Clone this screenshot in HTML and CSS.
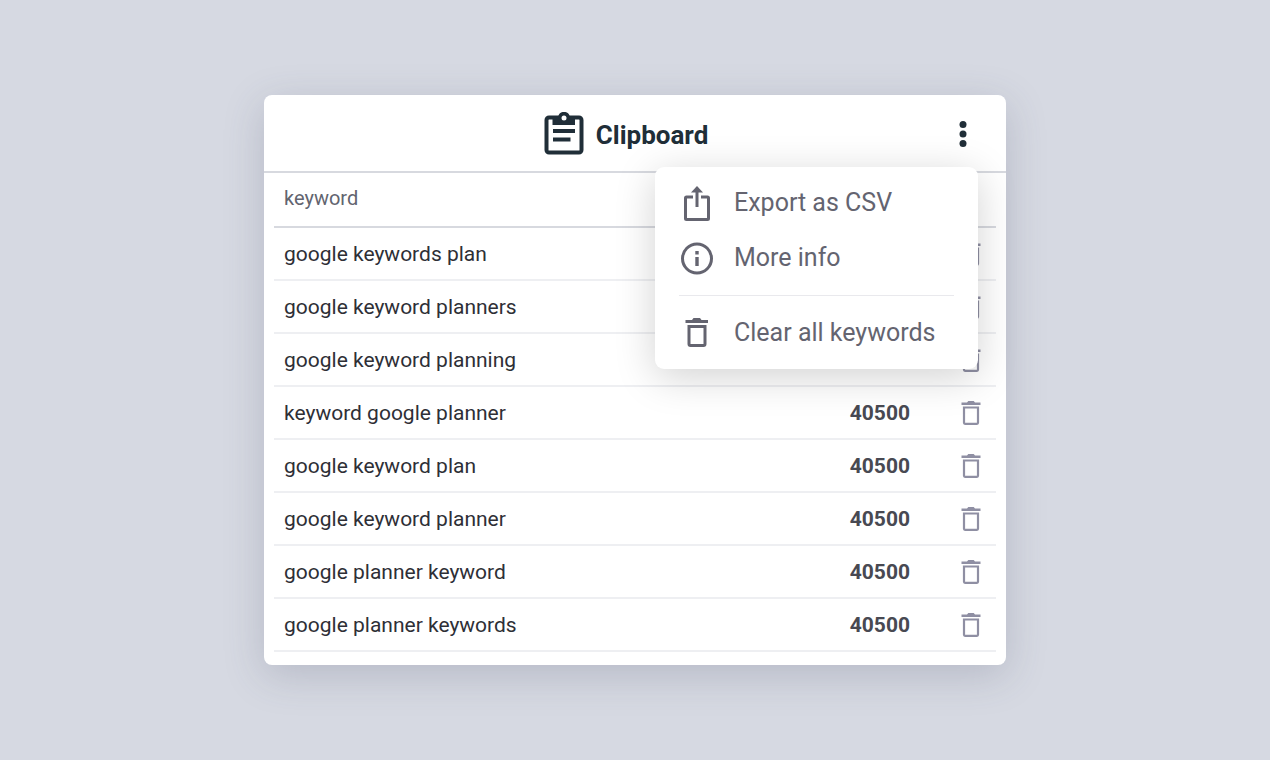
FILE: index.html
```html
<!DOCTYPE html>
<html lang="en">
<head>
<meta charset="utf-8">
<title>Clipboard</title>
<meta name="viewport" content="width=device-width, initial-scale=1">
<link rel="stylesheet" href="styles.css">
</head>
<body>
<svg class="sprite" aria-hidden="true">
  <symbol id="trash" viewBox="0 -1 20 25">
    <path fill="currentColor" d="M.5 1.500H6L7.300 0h5.400L14 1.500h5.500V4H.5z"/>
    <path fill="none" stroke="currentColor" stroke-width="2.200" d="M3 6.500h14V21.800q0 1-1 1H4q-1 0-1-1z"/>
  </symbol>
</svg>
<main class="card">
  <header class="card-header">
    <h1 class="title">
      <svg class="title-icon" viewBox="0 0 40 44" aria-hidden="true">
        <rect x="2.500" y="5.500" width="35" height="35" rx="2.500" fill="none" stroke="currentColor" stroke-width="4"/>
        <path fill="currentColor" d="M8.500 4h5.800a6 6 0 0 1 11.400 0H31v9H8.500z"/>
        <circle cx="20" cy="6" r="2.500" fill="#fff"/>
        <path fill="currentColor" d="M9 17h22v4H9zM9 25.500h17.500v4H9z"/>
      </svg>
      Clipboard
    </h1>
    <button class="more" type="button" aria-label="Clipboard options" aria-expanded="true">
      <svg viewBox="0 0 8 28" aria-hidden="true" fill="currentColor"><circle cx="4" cy="3.500" r="3.500"/><circle cx="4" cy="13" r="3.500"/><circle cx="4" cy="22.500" r="3.500"/></svg>
    </button>
    <div class="menu">
      <button class="menu-item" type="button">
        <svg class="menu-icon" viewBox="0 0 36 36" aria-hidden="true" fill="none" stroke="currentColor" stroke-width="3">
          <path d="M14 12H7.500q-1 0-1 1v20.500q0 1 1 1h21q1 0 1-1V13q0-1-1-1H22M18 22V6"/>
          <path fill="currentColor" stroke="none" d="M18 1l6 6.500H12z"/>
        </svg>
        Export as CSV
      </button>
      <button class="menu-item" type="button">
        <svg class="menu-icon" viewBox="0 0 36 36" aria-hidden="true">
          <circle cx="18" cy="18.500" r="14.500" fill="none" stroke="currentColor" stroke-width="3"/>
          <path fill="currentColor" d="M16.300 11h3.400v3.400h-3.400zM16.300 17h3.400v9h-3.400z"/>
        </svg>
        More info
      </button>
      <hr class="menu-rule">
      <button class="menu-item" type="button">
        <svg class="menu-icon" viewBox="0 0 36 36" aria-hidden="true">
          <path fill="currentColor" d="M6.500 5h6.500l1.500-2h6.500l1.500 2H29v3H6.500z"/>
          <path fill="none" stroke="currentColor" stroke-width="3" d="M10 11.500h16V29q0 1.500-1.500 1.500h-13Q10 30.500 10 29z"/>
        </svg>
        Clear all keywords
      </button>
    </div>
  </header>
  <table class="keywords">
    <thead>
      <tr><th class="name" scope="col">keyword</th><th class="volume"></th><th class="action"></th></tr>
    </thead>
    <tbody>
      <tr><td class="name">google keywords plan</td><td class="volume"></td><td class="action"><button class="remove" type="button" aria-label="Remove google keywords plan"><svg><use href="#trash"/></svg></button></td></tr>
      <tr><td class="name">google keyword planners</td><td class="volume"></td><td class="action"><button class="remove" type="button" aria-label="Remove google keyword planners"><svg><use href="#trash"/></svg></button></td></tr>
      <tr><td class="name">google keyword planning</td><td class="volume"></td><td class="action"><button class="remove" type="button" aria-label="Remove google keyword planning"><svg><use href="#trash"/></svg></button></td></tr>
      <tr><td class="name">keyword google planner</td><td class="volume">40500</td><td class="action"><button class="remove" type="button" aria-label="Remove keyword google planner"><svg><use href="#trash"/></svg></button></td></tr>
      <tr><td class="name">google keyword plan</td><td class="volume">40500</td><td class="action"><button class="remove" type="button" aria-label="Remove google keyword plan"><svg><use href="#trash"/></svg></button></td></tr>
      <tr><td class="name">google keyword planner</td><td class="volume">40500</td><td class="action"><button class="remove" type="button" aria-label="Remove google keyword planner"><svg><use href="#trash"/></svg></button></td></tr>
      <tr><td class="name">google planner keyword</td><td class="volume">40500</td><td class="action"><button class="remove" type="button" aria-label="Remove google planner keyword"><svg><use href="#trash"/></svg></button></td></tr>
      <tr><td class="name">google planner keywords</td><td class="volume">40500</td><td class="action"><button class="remove" type="button" aria-label="Remove google planner keywords"><svg><use href="#trash"/></svg></button></td></tr>
    </tbody>
  </table>
</main>
</body>
</html>
```
FILE: styles.css
```css
* {
  box-sizing: border-box;
}

body {
  margin: 0;
  min-height: 100vh;
  display: flex;
  align-items: center;
  justify-content: center;
  background: #d6d9e2;
  color: #2e2f36;
  font-family: Roboto, "Liberation Sans", sans-serif;
}

button {
  border: 0;
  padding: 0;
  background: none;
  font: inherit;
  cursor: pointer;
}

svg {
  display: block;
}

.sprite {
  position: absolute;
  width: 0;
  height: 0;
}

.card {
  width: 100%;
  max-width: 742px;
  padding-bottom: 13px;
  border-radius: 8px;
  background: #fff;
  box-shadow: 0 10px 40px rgba(70, 74, 98, 0.22);
}

.card-header {
  position: relative;
  display: grid;
  grid-template-columns: 1fr auto 1fr;
  align-items: center;
  padding: 17px 28px 13px 10px;
  border-bottom: 2px solid #d7d9df;
  color: #202e38;
}

.title {
  grid-column: 2;
  display: flex;
  align-items: flex-start;
  gap: 12px;
  margin: 0;
  font-size: 26px;
  line-height: 46px;
  font-weight: 700;
}

.title-icon {
  width: 40px;
  height: 44px;
}

.more {
  justify-self: end;
  width: 30px;
  height: 36px;
  color: #202e38;
}

.more svg {
  width: 8px;
  height: 28px;
  margin: 0 auto;
}

.menu {
  position: absolute;
  top: 72px;
  right: 28px;
  z-index: 1;
  width: 323px;
  padding: 8px 24px 9px;
  border-radius: 9px;
  background: #fff;
  box-shadow: 0 8px 40px rgba(0, 0, 0, 0.18);
}

.menu-item {
  display: flex;
  align-items: center;
  gap: 19px;
  width: 100%;
  height: 55px;
  color: #646470;
  font-size: 25px;
  text-align: left;
  white-space: nowrap;
}

.menu-icon {
  width: 36px;
  height: 36px;
}

.menu-rule {
  height: 1px;
  margin: 10px 0 9px;
  border: 0;
  background: #e9e9ed;
}

.keywords {
  width: calc(100% - 20px);
  margin: 0 10px;
  border-collapse: separate;
  border-spacing: 0;
  font-size: 21px;
}

.keywords th,
.keywords td {
  height: 53px;
  padding: 0 10px;
  border-bottom: 2px solid #eeeff2;
  text-align: left;
}

.keywords th {
  height: 55px;
  padding-bottom: 4px;
  border-color: #d7d9df;
  color: #62646f;
  font-size: 20px;
  font-weight: 400;
}

.keywords .volume {
  padding-right: 36px;
  color: #484952;
  font-weight: 700;
  text-align: right;
}

.keywords .action {
  width: 50px;
  padding: 0;
}

.remove {
  display: block;
  margin: 0 auto;
  color: #8f8fa3;
}

.remove svg {
  width: 20px;
  height: 25px;
}
```
